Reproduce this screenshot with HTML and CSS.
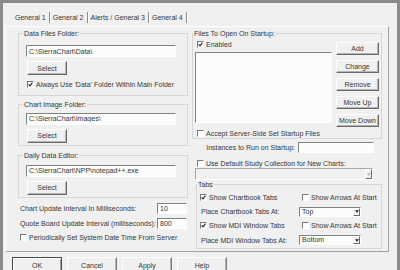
FILE: index.html
```html
<!DOCTYPE html>
<html lang="en">
<head>
    <meta charset="UTF-8">
    <title>General Settings</title>
    <link rel="stylesheet" href="styles.css">
</head>
<body>
    <div class="tabs">
        <span class="tab active">General 1</span>
        <span class="tab">General 2</span>
        <span class="tab">Alerts / General 3</span>
        <span class="tab">General 4</span>
    </div>

    <div class="page">
        <div class="col">
            <fieldset class="group data-files">
                <legend>Data Files Folder:</legend>
                <input class="path" type="text" value="C:\SierraChart\Data\">
                <button class="btn select">Select</button>
                <label class="check indent"><span class="cb"><svg viewBox="0 0 5 5"><path d="M0.6 2.3L2 3.9L4.4 0.7"/></svg></span>Always Use 'Data' Folder Within Main Folder</label>
            </fieldset>

            <fieldset class="group image-folder">
                <legend>Chart Image Folder:</legend>
                <input class="path" type="text" value="C:\SierraChart\Images\">
                <button class="btn select">Select</button>
            </fieldset>

            <fieldset class="group editor">
                <legend>Daily Data Editor:</legend>
                <input class="path" type="text" value="C:\SierraChart\NPP\notepad++.exe">
                <button class="btn select">Select</button>
            </fieldset>

            <div class="num-row first">
                <span>Chart Update Interval In Milliseconds:</span>
                <input class="num" type="text" value="10">
            </div>
            <div class="num-row">
                <span>Quote Board Update Interval (milliseconds):</span>
                <input class="num" type="text" value="800">
            </div>
            <label class="check periodic"><span class="cb"></span>Periodically Set System Date Time From Server</label>
        </div>

        <div class="col">
            <fieldset class="group files">
                <legend>Files To Open On Startup:</legend>
                <div class="files-body">
                    <div class="files-list">
                        <label class="check enabled"><span class="cb"><svg viewBox="0 0 5 5"><path d="M0.6 2.3L2 3.9L4.4 0.7"/></svg></span>Enabled</label>
                        <div class="list"></div>
                    </div>
                    <div class="side-buttons">
                        <button class="btn side">Add</button>
                        <button class="btn side">Change</button>
                        <button class="btn side">Remove</button>
                        <button class="btn side">Move Up</button>
                        <button class="btn side">Move Down</button>
                    </div>
                </div>
                <label class="check accept"><span class="cb"></span>Accept Server-Side Set Startup Files</label>
            </fieldset>

            <div class="instances">
                <span>Instances to Run on Startup:</span>
                <input class="count" type="text" value="">
            </div>

            <label class="check study"><span class="cb"></span>Use Default Study Collection for New Charts:</label>
            <div class="combo disabled">
                <span class="combo-text"></span>
                <span class="arrow"><svg viewBox="0 0 5 3"><path d="M0 0H5L2.5 3Z"/></svg></span>
            </div>

            <fieldset class="group tabs-group">
                <legend>Tabs</legend>
                <div class="tab-grid">
                    <label class="check"><span class="cb"><svg viewBox="0 0 5 5"><path d="M0.6 2.3L2 3.9L4.4 0.7"/></svg></span>Show Chartbook Tabs</label>
                    <label class="check shift"><span class="cb"></span>Show Arrows At Start</label>
                    <span class="place">Place Chartbook Tabs At:</span>
                    <div class="combo">
                        <span class="combo-text">Top</span>
                        <span class="arrow"><svg viewBox="0 0 5 3"><path d="M0 0H5L2.5 3Z"/></svg></span>
                    </div>
                    <label class="check"><span class="cb"><svg viewBox="0 0 5 5"><path d="M0.6 2.3L2 3.9L4.4 0.7"/></svg></span>Show MDI Window Tabs</label>
                    <label class="check shift"><span class="cb"></span>Show Arrows At Start</label>
                    <span class="place">Place MDI Window Tabs At:</span>
                    <div class="combo">
                        <span class="combo-text">Bottom</span>
                        <span class="arrow"><svg viewBox="0 0 5 3"><path d="M0 0H5L2.5 3Z"/></svg></span>
                    </div>
                </div>
            </fieldset>
        </div>
    </div>

    <div class="actions">
        <button class="btn action default">OK</button>
        <button class="btn action">Cancel</button>
        <button class="btn action">Apply</button>
        <button class="btn action">Help</button>
    </div>
</body>
</html>
```

FILE: styles.css
```css
* {
    box-sizing: border-box;
}

body {
    margin: 0;
    width: 400px;
    height: 270px;
    overflow: hidden;
    background: #f0f0f0;
    border-top: 3px solid #8a8a8a;
    border-left: 3px solid #8a8a8a;
    border-right: 3px solid #8a8a8a;
    font: 7px "Liberation Sans", Arial, sans-serif;
    color: #363636;
}

/* tab strip */
.tabs {
    display: flex;
    align-items: center;
    height: 17px;
    margin: 6px 0 0 9px;
}

.tab {
    padding: 0 3px;
    line-height: 11px;
    border-right: 1px solid #8c8c8c;
    box-shadow: 1px 0 #fff;
}

.page {
    display: grid;
    grid-template-columns: 170px 190px;
    column-gap: 4px;
    align-items: start;
    width: 384px;
    height: 226px;
    margin-left: 2px;
    padding: 2px 0 0 12px;
    border: 1px solid;
    border-color: #fff #a0a0a0 #a0a0a0 #fff;
}

/* group boxes */
.group {
    margin: 0;
    min-width: 0;
    padding: 0 5px 2px 7px;
    border: 1px solid #d6d6d6;
}

.group legend {
    padding: 0 1px;
    margin-left: -3px;
    line-height: 9px;
}

.data-files {
    padding-top: 7px;
    padding-bottom: 6px;
}

.image-folder {
    margin-top: 4.5px;
    padding-top: 3.5px;
}

.editor {
    margin-top: 5.5px;
    padding-top: 4.5px;
}

/* controls */
input {
    font: inherit;
    color: #363636;
    margin: 0;
    padding: 0 2px;
    border: 1px solid;
    border-color: #828282 #fff #fff #828282;
    background: #fafdfa;
    outline: none;
}

.path {
    display: block;
    width: 150px;
    height: 12px;
}

.btn {
    display: block;
    padding: 0;
    font: inherit;
    color: #363636;
    background: #f0f0f0;
    border: 1px solid;
    border-color: #fff #6a6a6a #6a6a6a #fff;
    box-shadow: inset -1px -1px #b4b4b4;
}

.select {
    width: 40px;
    height: 14px;
    margin: 4px 0 0 1px;
}

.check {
    display: flex;
    align-items: center;
    gap: 2px;
    height: 9px;
    white-space: nowrap;
}

.cb {
    display: inline-flex;
    align-items: center;
    justify-content: center;
    width: 7px;
    height: 7px;
    flex: none;
    border: 1px solid;
    border-color: #7a7a7a #fdfdfd #fdfdfd #7a7a7a;
    background: #fff;
}

.cb svg {
    width: 5px;
    height: 5px;
}

.cb path {
    fill: none;
    stroke: #2a2a2a;
    stroke-width: 1.2;
}

.indent {
    margin: 4.5px 0 0 1px;
}

.num-row {
    display: flex;
    justify-content: space-between;
    align-items: center;
    height: 11px;
    margin-top: 4px;
    padding: 0 1px 0 2px;
}

.num-row.first {
    margin-top: 5px;
}

.num {
    width: 30px;
    height: 11px;
}

.periodic {
    margin: 4.5px 0 0 2px;
}

/* right column */
.files {
    padding: 0 2px 0.5px 2px;
}

.files legend {
    margin-left: -2px;
}

.files-body {
    display: grid;
    grid-template-columns: 137px 43px;
    column-gap: 4px;
}

.enabled {
    margin: 1.5px 0 0 2px;
}

.list {
    height: 71px;
    margin-top: 3.5px;
    border: 1px solid;
    border-color: #828282 #fff #fff #828282;
    background: #fafdfa;
}

.side-buttons {
    display: flex;
    flex-direction: column;
    gap: 5px;
    padding-top: 4px;
}

.side {
    width: 43px;
    height: 13px;
}

.accept {
    margin: 1.5px 0 0 2px;
}

.instances {
    display: flex;
    justify-content: flex-end;
    align-items: center;
    gap: 3px;
    height: 11px;
    margin-top: 3px;
    padding-right: 8px;
}

.count {
    width: 76px;
    height: 11px;
}

.study {
    margin: 5.5px 0 0 5px;
}

.combo {
    display: flex;
    align-items: stretch;
    height: 10px;
    width: 62px;
    border: 1px solid;
    border-color: #828282 #fff #fff #828282;
    background: #fafdfa;
}

.combo-text {
    flex: 1;
    padding-left: 2px;
    line-height: 8px;
}

.arrow {
    display: flex;
    align-items: center;
    justify-content: center;
    width: 7px;
    background: #f0f0f0;
    border: 1px solid;
    border-color: #fff #6a6a6a #6a6a6a #fff;
}

.arrow svg {
    width: 4px;
    height: 3px;
    fill: #222;
}

.combo.disabled {
    width: 178px;
    height: 12px;
    margin: 0.5px 0 0 3px;
    background: #f0f0f0;
    border-color: #a8a8a8 #fff #fff #a8a8a8;
}

.combo.disabled .arrow svg {
    fill: #b0b0b0;
}

.tabs-group {
    margin-left: 4px;
    padding: 1px 0 0 3px;
}

.tab-grid {
    display: grid;
    grid-template-columns: 99px auto;
    grid-auto-rows: 14.4px;
    align-items: center;
}

.shift {
    margin-left: 3px;
}

.place {
    padding-left: 1px;
}

/* bottom buttons */
.actions {
    display: flex;
    gap: 5px;
    margin: 5px 0 0 9px;
}

.action {
    width: 50px;
    height: 16px;
    border-color: #fff #7a7a7a #7a7a7a #fff;
}

.action.default {
    border: 1px solid #4a4a4a;
    box-shadow: inset 1px 1px #fff, inset -1px -1px #a0a0a0;
}
```
